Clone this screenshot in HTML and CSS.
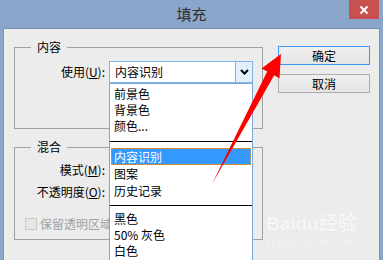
FILE: index.html
```html
<!DOCTYPE html>
<html lang="zh">
<head>
<meta charset="utf-8">
<title>填充</title>
<link rel="stylesheet" href="styles.css">
</head>
<body>
<div class="window">
  <div class="titlebar">
    <span></span>
    <span class="title">填充</span>
    <span class="close">
      <svg width="10" height="10" viewBox="0 0 10 10"><path d="M1.5 1.5 L8.5 8.5 M8.5 1.5 L1.5 8.5" stroke="#fff" stroke-width="2" fill="none"/></svg>
    </span>
  </div>
  <div class="panel">
    <div class="groups">
      <div class="group group-content">
        <div class="legend">内容</div>
        <div class="row row-use">
          <span class="label">使用(<u>U</u>):</span>
          <div class="select">
            <span class="select-value">内容识别</span>
            <span class="select-btn">
              <svg width="9" height="6" viewBox="0 0 9 6"><path d="M1 1 L4.5 4.5 L8 1" stroke="#000" stroke-width="2" fill="none"/></svg>
            </span>
            <div class="menu">
              <div class="menu-group g1">
                <div class="item">前景色</div>
                <div class="item">背景色</div>
                <div class="item">颜色...</div>
              </div>
              <div class="sep"></div>
              <div class="menu-group g2">
                <div class="item selected">内容识别</div>
                <div class="item">图案</div>
                <div class="item">历史记录</div>
              </div>
              <div class="sep"></div>
              <div class="menu-group g3">
                <div class="item">黑色</div>
                <div class="item">50% 灰色</div>
                <div class="item">白色</div>
              </div>
            </div>
          </div>
        </div>
      </div>
      <div class="group group-blend">
        <div class="legend">混合</div>
        <div class="row row-mode"><span class="label">模式(<u>M</u>):</span></div>
        <div class="row row-opacity"><span class="label">不透明度(<u>O</u>):</span></div>
        <div class="row row-check">
          <span class="checkbox"></span>
          <span class="check-label">保留透明区域</span>
        </div>
      </div>
    </div>
    <div class="buttons">
      <div class="btn btn-default">确定</div>
      <div class="btn">取消</div>
    </div>
  </div>
  <div class="watermark">
    <div class="wm-main">Baidu经验</div>
    <div class="wm-sub">jingyan.baidu.com</div>
  </div>
  <svg class="arrow" width="383" height="260" viewBox="0 0 383 260">
    <polygon points="281,54 279.5,78.5 274.2,75.3 212,184 267.2,71.5 261.5,68.5" fill="#ff0000"/>
  </svg>
</div>
</body>
</html>
```
FILE: styles.css
```css
* { box-sizing: border-box; }
html, body {
  margin: 0;
  padding: 0;
  background: #8aa6cb;
}
body {
  font-family: "Noto Sans CJK SC", "Noto Sans", sans-serif;
  font-size: 12px;
  color: #000;
}
.window {
  position: relative;
  width: 383px;
  height: 260px;
  background: #8aa6cb;
  display: flex;
  flex-direction: column;
  overflow: hidden;
}
.titlebar {
  height: 28px;
  display: grid;
  grid-template-columns: 1fr auto 1fr;
  align-items: start;
}
.title {
  font-size: 15px;
  line-height: 28px;
  color: #2e2e2e;
}
.close {
  justify-self: end;
  width: 30px;
  height: 19px;
  margin-right: 4px;
  background: #c75050;
  display: flex;
  align-items: center;
  justify-content: center;
}
.close svg { display: block; }
.panel {
  flex: 1;
  margin: 0 3px;
  border: 1px solid #7b93b5;
  border-bottom: none;
  background: #ececec;
  display: flex;
  padding-left: 10px;
}
.groups {
  width: 249px;
  padding-top: 18px;
}
.group {
  border: 1px solid #a0a0a0;
}
.group-content { height: 82px; }
.group-blend { height: 93px; margin-top: 18px; }
.legend {
  width: max-content;
  margin: -9px 0 0 16px;
  padding: 0 6px;
  background: #ececec;
  line-height: 16px;
  font-size: 12px;
}
.row {
  display: flex;
  align-items: center;
}
.label {
  width: 90px;
  text-align: right;
  line-height: 20px;
  white-space: nowrap;
}
.row-use { margin-top: 6px; }
.row-mode { margin-top: 5px; }
.row-opacity { margin-top: 2px; }
.row-check { margin-top: 12px; padding-left: 10px; line-height: 20px; }
.select {
  position: relative;
  margin-left: 4px;
  width: 144px;
  height: 22px;
  border: 1px solid #7eb4ea;
  background: #fff;
  display: flex;
  align-items: center;
}
.select-value {
  flex: 1;
  padding-left: 5px;
  line-height: 20px;
}
.select-btn {
  width: 17px;
  height: 20px;
  border-left: 1px solid #7eb4ea;
  background: #e3effb;
  display: flex;
  align-items: center;
  justify-content: center;
}
.select-btn svg { display: block; }
.menu {
  position: absolute;
  top: calc(100% + 1px);
  left: -1px;
  right: -1px;
  height: 190px;
  background: #fff;
  border: 1px solid #7aa7dc;
  padding-top: 2px;
  z-index: 2;
}
.item {
  padding-left: 4px;
  white-space: nowrap;
}
.g1 .item { line-height: 16px; height: 16px; }
.g2 .item { line-height: 17px; height: 17px; }
.g3 .item { line-height: 16px; height: 16px; }
.item.selected {
  margin: 0 1px 0 1px;
  padding-left: 2px;
  background: #3399ff;
  color: #fff;
  border: 1px dotted #e8a040;
  line-height: 15px;
}
.sep {
  height: 1px;
  background: #000;
  margin: 7px 0 6px;
}
.g2 + .sep { margin: 6px 0 5px; }
.checkbox {
  width: 12px;
  height: 12px;
  border: 1px solid #c9c9c9;
  background: #e6e6e6;
}
.check-label {
  margin-left: 3px;
  color: #a2a2a2;
  white-space: nowrap;
}
.buttons {
  margin-left: 15px;
  padding-top: 17px;
  width: 92px;
  display: flex;
  flex-direction: column;
  gap: 9px;
}
.btn {
  height: 19px;
  border: 1px solid #acacac;
  background: linear-gradient(#f0f0f0, #e5e5e5);
  text-align: center;
  line-height: 17px;
  font-size: 12px;
}
.btn-default {
  border-color: #3c97f0;
}
.watermark {
  position: absolute;
  left: 266px;
  top: 213px;
  color: #f6f6f6;
  text-shadow: 0 0 1px #e0e0e0;
  font-family: "Liberation Sans", "Noto Sans CJK SC", sans-serif;
  pointer-events: none;
}
.wm-main {
  font-size: 19px;
  font-weight: bold;
  line-height: 22px;
}
.wm-sub {
  font-size: 11px;
  line-height: 12px;
  letter-spacing: 0.3px;
}
.arrow {
  position: absolute;
  left: 0;
  top: 0;
  pointer-events: none;
  z-index: 5;
}
```
